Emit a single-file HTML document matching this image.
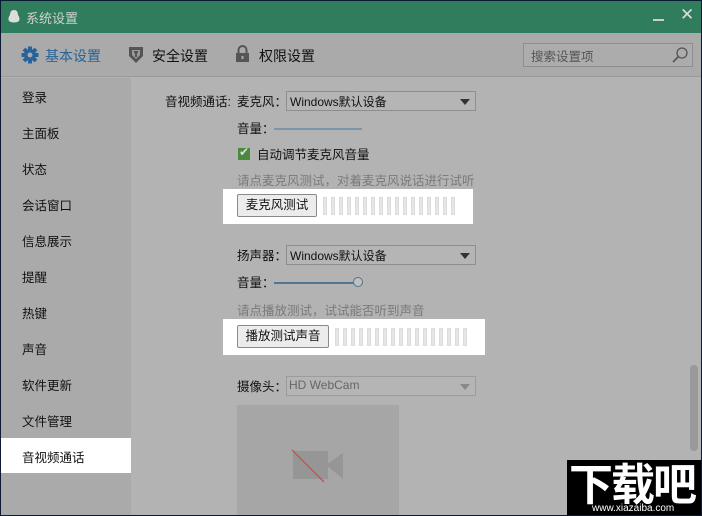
<!DOCTYPE html>
<html><head><meta charset="utf-8"><style>
*{margin:0;padding:0;box-sizing:border-box}
body{width:702px;height:516px;overflow:hidden;background:#b3b3b3;font-family:"Liberation Sans","Noto Sans CJK SC",sans-serif;font-size:12px;color:#111;position:relative}
.a{position:absolute}
.win{position:absolute;left:0;top:0;width:702px;height:516px;border:1px solid #0d1a33;border-top:none}
.title{left:0;top:0;width:702px;height:33px;background:#2f7d5c;border-top:1px solid #0d1a33}
.tool{left:1px;top:33px;width:700px;height:44px;background:#a9aaa9;border-bottom:1px solid #9a9a9a}
.side{left:1px;top:78px;width:130px;height:437px;background:#aaaaaa}
.si{position:absolute;left:22px;font-size:12.5px}
.grey{color:#7a7a7a}
.sel{border:1px solid #8e8e8e;background:#b5b5b5;height:20px}
.btn{border:1px solid #8a8a8a;border-radius:2px;background:#ececec;height:23px;font-size:12.5px;text-align:center;line-height:21px}
.bars{display:flex;gap:4px}
.bars i{display:block;width:4px;height:18px;background:#e6e6e6;border:1px solid #dcdcdc}
.tri{position:absolute;right:5px;top:7px;width:0;height:0;border-left:5px solid transparent;border-right:5px solid transparent;border-top:6px solid #333}
</style></head><body>
<div class="a title"></div>
<svg class="a" style="left:7px;top:9px" width="14" height="16" viewBox="0 0 14 16"><path d="M7 1C4 1 3 3.5 3 6 1.5 8 1 10 2 12 3 13 5 13.5 7 13.5 9 13.5 11 13 12 12 13 10 12.5 8 11 6 11 3.5 10 1 7 1Z" fill="#ddd"/></svg>
<div class="a" style="left:26px;top:8px;color:#d0d0d0;font-size:13px">系统设置</div>
<div class="a" style="left:653px;top:19px;width:11px;height:2px;background:#ccc"></div>
<div class="a" style="left:680px;top:5px;color:#ddd;font-size:17px">✕</div>
<div class="a tool"></div>
<svg class="a" style="left:21px;top:46px" width="18" height="18" viewBox="0 0 18 18"><g fill="#27639a"><circle cx="9" cy="9" r="6"/><rect x="7" y="0.5" width="4" height="17"/><rect x="0.5" y="7" width="17" height="4"/><rect x="7" y="0.5" width="4" height="17" transform="rotate(45 9 9)"/><rect x="7" y="0.5" width="4" height="17" transform="rotate(-45 9 9)"/></g><circle cx="9" cy="9" r="2.5" fill="#a9aaa9"/></svg>
<div class="a" style="left:45px;top:46px;font-size:14px;color:#27639a">基本设置</div>
<svg class="a" style="left:128px;top:46px" width="16" height="18" viewBox="0 0 16 18"><path d="M1 1H15V10L8 17 1 10Z" fill="#555"/><path d="M4 4H12V9L8 13 4 9Z" fill="#999"/><path d="M6 5H10V7H9V11H7V7H6Z" fill="#555"/></svg>
<div class="a" style="left:152px;top:46px;font-size:14px">安全设置</div>
<svg class="a" style="left:235px;top:45px" width="15" height="18" viewBox="0 0 15 18"><path d="M3.5 8V5A4 4 0 0 1 11.5 5V8" stroke="#555" stroke-width="2" fill="none"/><rect x="1" y="8" width="13" height="9" fill="#555"/><rect x="6.5" y="11" width="2" height="3" fill="#aaa"/></svg>
<div class="a" style="left:259px;top:46px;font-size:14px">权限设置</div>
<div class="a" style="left:523px;top:43px;width:170px;height:24px;border:1px solid #8e8e8e;background:#acacac"></div>
<div class="a" style="left:531px;top:46px;color:#555;font-size:12.5px">搜索设置项</div>
<svg class="a" style="left:671px;top:46px" width="18" height="18" viewBox="0 0 18 18"><circle cx="11" cy="7" r="5" stroke="#555" stroke-width="1.3" fill="none"/><path d="M7.5 10.5L2 16" stroke="#555" stroke-width="1.6"/></svg>
<div class="a side"></div>
<div class="a" style="left:1px;top:438px;width:130px;height:35px;background:#fff"></div>
<div class="si" style="top:87px">登录</div>
<div class="si" style="top:123px">主面板</div>
<div class="si" style="top:159px">状态</div>
<div class="si" style="top:195px">会话窗口</div>
<div class="si" style="top:231px">信息展示</div>
<div class="si" style="top:267px">提醒</div>
<div class="si" style="top:303px">热键</div>
<div class="si" style="top:339px">声音</div>
<div class="si" style="top:375px">软件更新</div>
<div class="si" style="top:411px">文件管理</div>
<div class="si" style="top:447px">音视频通话</div>

<div class="a" style="left:165px;top:91px;font-size:12.5px">音视频通话:</div>
<div class="a" style="left:237px;top:91px;font-size:12.5px">麦克风：</div>
<div class="a sel" style="left:286px;top:91px;width:190px"><span style="position:absolute;left:3px;top:1px;font-size:12px">Windows默认设备</span><div class="tri"></div></div>
<div class="a" style="left:237px;top:118px;font-size:12.5px">音量：</div>
<div class="a" style="left:274px;top:128px;width:88px;height:2px;background:#7d95a8"></div>
<div class="a" style="left:238px;top:148px;width:12px;height:12px;background:#4b8a3c"></div>
<div class="a" style="left:239px;top:145px;color:#ddd;font-size:12px">✔</div>
<div class="a" style="left:257px;top:144px;font-size:12.5px">自动调节麦克风音量</div>
<div class="a grey" style="left:237px;top:170px;font-size:12.5px">请点麦克风测试，对着麦克风说话进行试听</div>
<div class="a" style="left:223px;top:189px;width:250px;height:35px;background:#fff"></div>
<div class="a btn" style="left:237px;top:194px;width:80px">麦克风测试</div>
<div class="a bars" style="left:323px;top:197px"><i></i><i></i><i></i><i></i><i></i><i></i><i></i><i></i><i></i><i></i><i></i><i></i><i></i><i></i><i></i><i></i><i></i></div>

<div class="a" style="left:237px;top:245px;font-size:12.5px">扬声器：</div>
<div class="a sel" style="left:286px;top:245px;width:190px"><span style="position:absolute;left:3px;top:1px;font-size:12px">Windows默认设备</span><div class="tri"></div></div>
<div class="a" style="left:237px;top:272px;font-size:12.5px">音量：</div>
<div class="a" style="left:274px;top:282px;width:80px;height:2px;background:#4f7590"></div>
<div class="a" style="left:353px;top:277px;width:10px;height:10px;border:1px solid #4f7590;border-radius:50%;background:#c0c0c0"></div>
<div class="a grey" style="left:237px;top:300px;font-size:12.5px">请点播放测试，试试能否听到声音</div>
<div class="a" style="left:223px;top:319px;width:262px;height:36px;background:#fff"></div>
<div class="a btn" style="left:237px;top:325px;width:92px">播放测试声音</div>
<div class="a bars" style="left:335px;top:328px"><i></i><i></i><i></i><i></i><i></i><i></i><i></i><i></i><i></i><i></i><i></i><i></i><i></i><i></i><i></i><i></i><i></i></div>

<div class="a" style="left:237px;top:376px;font-size:12.5px">摄像头：</div>
<div class="a sel" style="left:286px;top:376px;width:190px;border-color:#9c9c9c"><span style="position:absolute;left:2px;top:1px;font-size:12px;color:#666">HD WebCam</span><div class="tri" style="border-top-color:#888"></div></div>
<div class="a" style="left:237px;top:405px;width:162px;height:111px;background:#a6a6a6"></div>
<svg class="a" style="left:290px;top:448px" width="54" height="36" viewBox="0 0 54 36"><rect x="3" y="3" width="35" height="28" fill="#969696"/><path d="M36 17L53 5V31Z" fill="#969696"/><path d="M2 2L34 34" stroke="#b06050" stroke-width="1.5"/></svg>
<div class="a" style="left:690px;top:365px;width:8px;height:86px;background:#999;border-radius:4px"></div>

<div class="a" style="left:567px;top:460px;width:135px;height:56px;background:#000"></div>
<div class="a" style="left:569px;top:457px;color:#fff;font-size:44px;font-weight:bold;letter-spacing:-2px;line-height:48px;font-family:'Noto Sans CJK SC',sans-serif">下载吧</div>
<div class="a" style="left:592px;top:503px;color:#fff;font-size:10px">www.xiazaiba.com</div>
<div class="win"></div>
</body></html>
